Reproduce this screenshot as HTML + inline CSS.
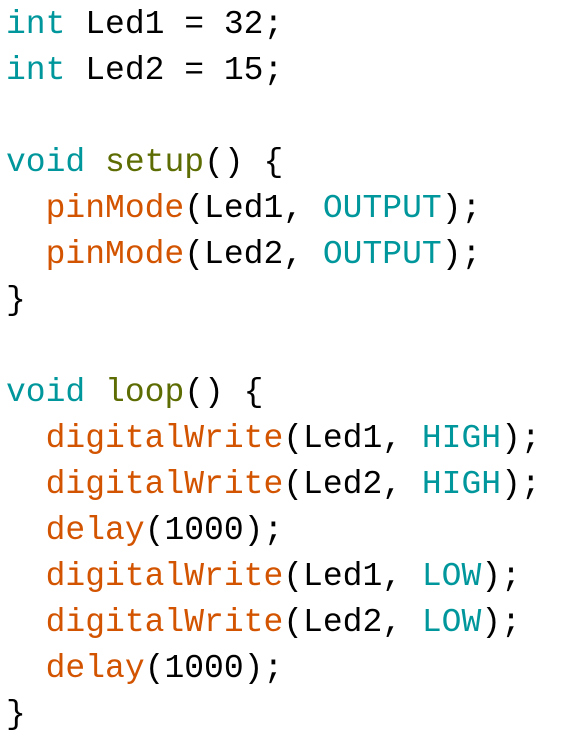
<!DOCTYPE html>
<html><head><style>
html,body{margin:0;padding:0;background:#fff;width:562px;height:756px;overflow:hidden}
pre{margin:0;padding:2px 0 0 6px;font-family:"Liberation Mono",monospace;font-size:33px;line-height:46px;color:#000}
.k{color:#00979C}.f{color:#D35400}.s{color:#5E6D03}
</style></head><body><pre><span class="k">int</span> Led1 = 32;
<span class="k">int</span> Led2 = 15;

<span class="k">void</span> <span class="s">setup</span>() {
  <span class="f">pinMode</span>(Led1, <span class="k">OUTPUT</span>);
  <span class="f">pinMode</span>(Led2, <span class="k">OUTPUT</span>);
}

<span class="k">void</span> <span class="s">loop</span>() {
  <span class="f">digitalWrite</span>(Led1, <span class="k">HIGH</span>);
  <span class="f">digitalWrite</span>(Led2, <span class="k">HIGH</span>);
  <span class="f">delay</span>(1000);
  <span class="f">digitalWrite</span>(Led1, <span class="k">LOW</span>);
  <span class="f">digitalWrite</span>(Led2, <span class="k">LOW</span>);
  <span class="f">delay</span>(1000);
}</pre></body></html>
